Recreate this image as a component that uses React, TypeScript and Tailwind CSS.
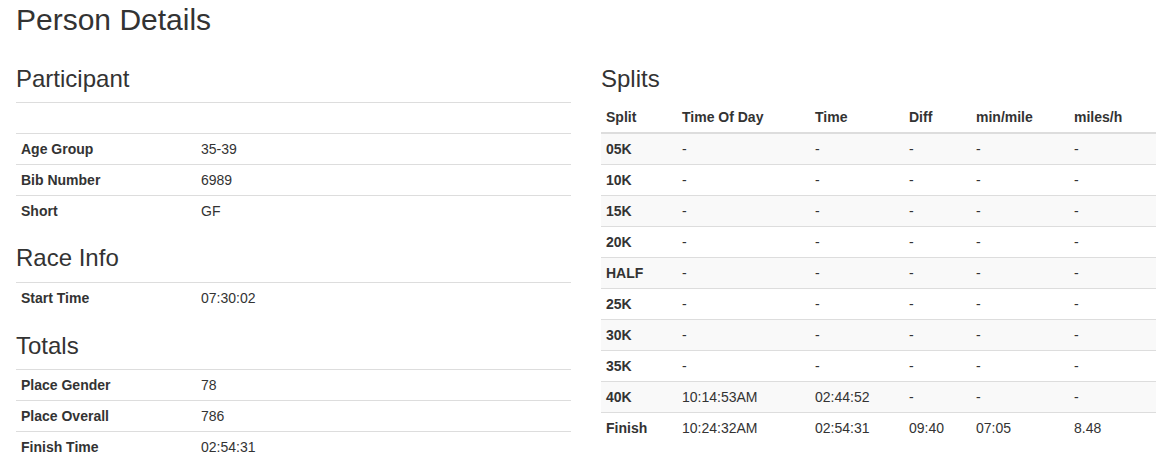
const participant = [
    { label: "", value: "" },
    { label: "Age Group", value: "35-39" },
    { label: "Bib Number", value: "6989" },
    { label: "Short", value: "GF" },
]

const raceInfo = [{ label: "Start Time", value: "07:30:02" }]

const totals = [
    { label: "Place Gender", value: "78" },
    { label: "Place Overall", value: "786" },
    { label: "Finish Time", value: "02:54:31" },
]

const splits = [
    ["05K", "-", "-", "-", "-", "-"],
    ["10K", "-", "-", "-", "-", "-"],
    ["15K", "-", "-", "-", "-", "-"],
    ["20K", "-", "-", "-", "-", "-"],
    ["HALF", "-", "-", "-", "-", "-"],
    ["25K", "-", "-", "-", "-", "-"],
    ["30K", "-", "-", "-", "-", "-"],
    ["35K", "-", "-", "-", "-", "-"],
    ["40K", "10:14:53AM", "02:44:52", "-", "-", "-"],
    ["Finish", "10:24:32AM", "02:54:31", "09:40", "07:05", "8.48"],
]

const headers = ["Split", "Time Of Day", "Time", "Diff", "min/mile", "miles/h"]
const colWidths = ["w-[76px]", "w-[133px]", "w-[94px]", "w-[67px]", "w-[98px]", "w-[87px]"]

interface IRow {
    label: string
    value: string
}

const InfoTable = ({ rows, spacing = "mb-[20px]" }: { rows: IRow[]; spacing?: string }) => {
    return (
        <table className={`w-full ${spacing}`}>
            <tbody>
                {rows.map((row, i) => (
                    <tr key={i}>
                        <th className="w-[180px] text-left font-bold border-t border-[#ddd] p-[5px] leading-5">
                            {row.label || "\u00a0"}
                        </th>
                        <td className="border-t border-[#ddd] p-[5px] leading-5">{row.value || "\u00a0"}</td>
                    </tr>
                ))}
            </tbody>
        </table>
    )
}

const Heading = ({ children, first }: { children: string; first?: boolean }) => (
    <h3 className={`${first ? "mt-[20px]" : "mt-0"} mb-[10px] text-[24px] leading-[1.1] font-medium`}>{children}</h3>
)

export default function App() {
    return (
        <div className="font-['Liberation_Sans',Arial,sans-serif] text-[14px] leading-5 text-[#333] bg-white min-h-screen px-[16px]">
            <h2 className="mt-[3px] mb-[10px] text-[30px] leading-[1.1] font-medium">Person Details</h2>
            <div className="flex gap-[30px]">
                <div className="w-[555px]">
                    <Heading first>Participant</Heading>
                    <InfoTable rows={participant} spacing="mb-[19px]" />
                    <Heading>Race Info</Heading>
                    <InfoTable rows={raceInfo} />
                    <Heading>Totals</Heading>
                    <InfoTable rows={totals} />
                </div>
                <div className="w-[555px]">
                    <Heading first>Splits</Heading>
                    <table className="w-full mb-[20px]">
                        <thead>
                            <tr>
                                {headers.map((h, i) => (
                                    <th key={h} className={`${colWidths[i]} text-left font-bold border-b-2 border-[#ddd] p-[5px] leading-5`}>
                                        {h}
                                    </th>
                                ))}
                            </tr>
                        </thead>
                        <tbody>
                            {splits.map((row, r) => (
                                <tr key={row[0]} className={r % 2 === 0 ? "bg-[#f9f9f9]" : ""}>
                                    {row.map((cell, c) =>
                                        c === 0 ? (
                                            <th key={c} className="text-left font-bold border-t border-[#ddd] p-[5px] leading-5">{cell}</th>
                                        ) : (
                                            <td key={c} className="border-t border-[#ddd] p-[5px] leading-5">{cell}</td>
                                        )
                                    )}
                                </tr>
                            ))}
                        </tbody>
                    </table>
                </div>
            </div>
        </div>
    )
}
